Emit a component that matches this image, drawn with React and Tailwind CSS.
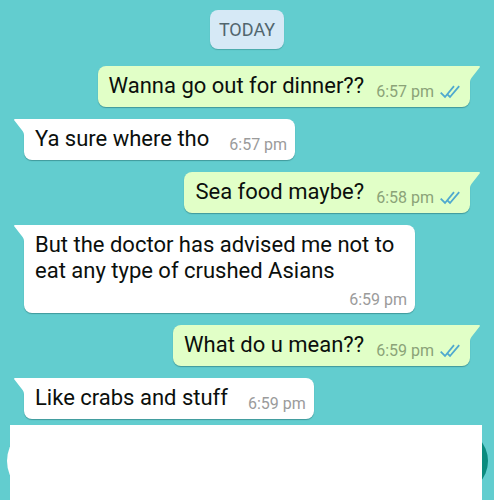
import React from 'react';
import clsx from 'clsx';

const messages = [
  { id: 1, mine: true, text: 'Wanna go out for dinner??', time: '6:57 pm' },
  { id: 2, mine: false, text: 'Ya sure where tho', time: '6:57 pm' },
  { id: 3, mine: true, text: 'Sea food maybe?', time: '6:58 pm' },
  { id: 4, mine: false, text: 'But the doctor has advised me not to eat any type of crushed Asians', time: '6:59 pm', long: true },
  { id: 5, mine: true, text: 'What do u mean??', time: '6:59 pm' },
  { id: 6, mine: false, text: 'Like crabs and stuff', time: '6:59 pm' },
];

const Ticks = () => (
  <svg viewBox="0 0 20 14" className="w-5 h-3.5 shrink-0" fill="none" stroke="#4fa9cf" strokeWidth="1.8" role="img" aria-label="Read">
    <path d="M0.7 7.6 L5 12 L14 1.2" />
    <path d="M7.6 9.6 L10 12 L19.2 1.2" />
  </svg>
);

const Tail = ({ mine }) => (
  <svg
    viewBox="0 0 11 16"
    className={clsx('absolute top-0 w-[11px] h-4', mine ? '-right-2.5 -scale-x-100 text-[#e1ffc7]' : '-left-2.5 text-white')}
    fill="currentColor"
    aria-hidden="true"
  >
    <path d="M11 0 H1 C0 0 -0.2 0.9 0.4 1.6 L8.6 12 Q10 13.8 10 16 H11 Z" />
  </svg>
);

const Message = ({ mine, text, time, long }) => (
  <li
    className={clsx(
      'relative flex rounded-lg pt-[7px] pl-[11px] shadow-[0_1px_1px_rgba(0,60,60,0.35)]',
      mine ? 'self-end rounded-tr-none bg-[#e1ffc7] pr-2.5' : 'self-start rounded-tl-none bg-white pr-2',
      long ? 'flex-col gap-1 max-w-[391px] pb-px' : 'pb-2',
      !long && (mine ? 'gap-3' : 'gap-5'),
    )}
  >
    <Tail mine={mine} />
    <p className="text-[22px] leading-[26px] text-[#0b0f0c]">{text}</p>
    <div className={clsx('flex items-center gap-1.5 self-end whitespace-nowrap', !long && '-mb-[5px]')}>
      <time className={clsx('text-base leading-6', mine ? 'text-[#8ba378]' : 'text-[#9b9b9b]')}>{time}</time>
      {mine && <Ticks />}
    </div>
  </li>
);

const App = () => (
  <main className="min-h-screen flex flex-col bg-[#62cdcf] pt-2.5 font-[Roboto,sans-serif]">
    <h1 className="self-center rounded-lg bg-[#d6e9f6] px-[9px] py-2 text-lg leading-[23px] font-normal text-[#51666e] shadow-[0_1px_1px_rgba(0,60,60,0.25)]">
      TODAY
    </h1>

    <ul className="mt-[17px] mb-1.5 flex flex-col gap-3 px-6">
      {messages.map((m) => <Message key={m.id} {...m} />)}
    </ul>

    {/* Bottom panel, with the input and mic edges showing behind it */}
    <div className="relative isolate flex flex-1 pl-2.5 pr-3">
      <span className="absolute -z-10 top-0 left-[7px] size-[72px] rounded-full bg-white" />
      <span className="absolute -z-10 top-1 right-1.5 size-16 rounded-full bg-[#0a8b7f]" />
      <div className="flex-1 bg-white" />
    </div>
  </main>
);

export default App;
